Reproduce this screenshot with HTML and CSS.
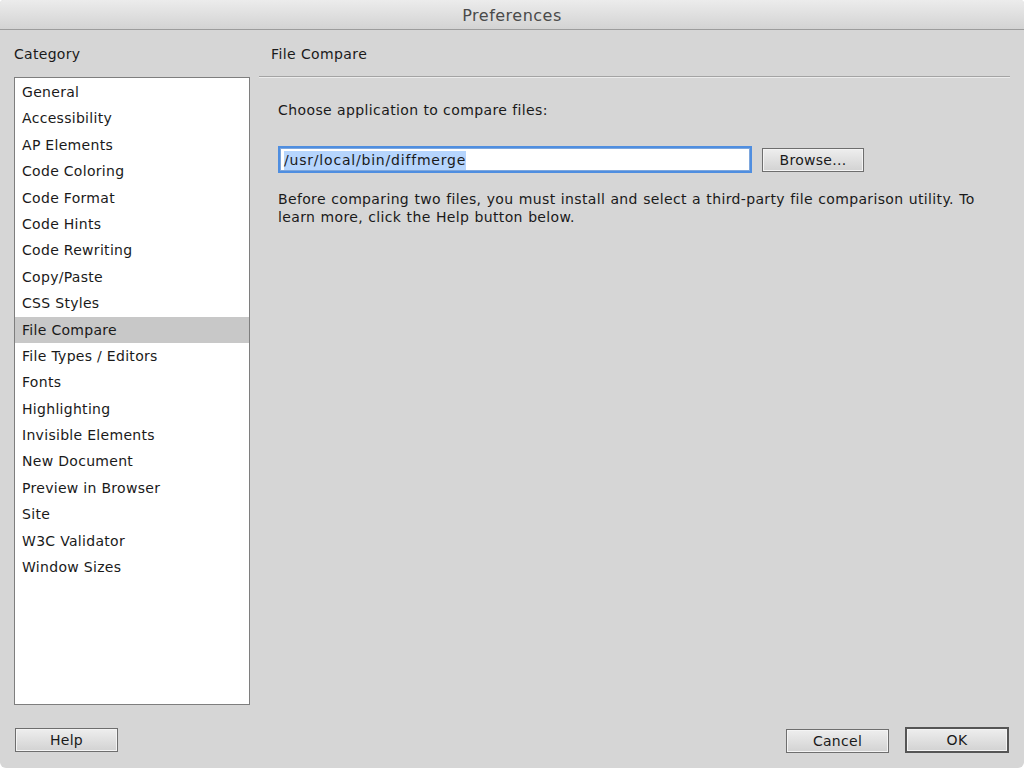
FILE: index.html
```html
<!DOCTYPE html>
<html>
<head>
<meta charset="utf-8">
<link rel="stylesheet" href="styles.css">
</head>
<body>
<div class="window">
  <div class="titlebar">Preferences</div>
  <div class="content">
    <div class="sidebar">
      <div class="label">Category</div>
      <div class="list">
        <div class="item">General</div>
        <div class="item">Accessibility</div>
        <div class="item">AP Elements</div>
        <div class="item">Code Coloring</div>
        <div class="item">Code Format</div>
        <div class="item">Code Hints</div>
        <div class="item">Code Rewriting</div>
        <div class="item">Copy/Paste</div>
        <div class="item">CSS Styles</div>
        <div class="item selected">File Compare</div>
        <div class="item">File Types / Editors</div>
        <div class="item">Fonts</div>
        <div class="item">Highlighting</div>
        <div class="item">Invisible Elements</div>
        <div class="item">New Document</div>
        <div class="item">Preview in Browser</div>
        <div class="item">Site</div>
        <div class="item">W3C Validator</div>
        <div class="item">Window Sizes</div>
      </div>
    </div>
    <div class="panel">
      <div class="panel-title">File Compare</div>
      <div class="panel-body">
        <div class="prompt">Choose application to compare files:</div>
        <div class="row">
          <div class="field"><span class="sel">/usr/local/bin/diffmerge</span></div>
          <div class="btn browse">Browse...</div>
        </div>
        <p class="note">Before comparing two files, you must install and select a third-party file comparison utility. To learn more, click the Help button below.</p>
      </div>
    </div>
  </div>
  <div class="footer">
    <div class="btn help">Help</div>
    <div class="actions">
      <div class="btn cancel">Cancel</div>
      <div class="btn ok">OK</div>
    </div>
  </div>
</div>
</body>
</html>
```
FILE: styles.css
```css
html, body {
  margin: 0;
  padding: 0;
  background: #ffffff;
}
body {
  font-family: "DejaVu Sans", "Liberation Sans", sans-serif;
  font-size: 14px;
  color: #1a1a1a;
}
.window {
  width: 1024px;
  height: 768px;
  background: #d6d6d6;
  border-radius: 4px 4px 6px 6px;
  display: flex;
  flex-direction: column;
  overflow: hidden;
}
.titlebar {
  height: 30px;
  line-height: 31px;
  text-align: center;
  font-size: 16px;
  color: #4a4a4a;
  background: linear-gradient(#ececec, #d3d3d3);
  border-bottom: 1px solid #9c9c9c;
  box-sizing: border-box;
  letter-spacing: 0.5px;
}
.content {
  display: flex;
  flex: 1;
  padding: 0 14px 0 14px;
}
.sidebar {
  width: 236px;
  display: flex;
  flex-direction: column;
}
.label {
  height: 47px;
  line-height: 49px;
  letter-spacing: 0.3px;
}
.list {
  height: 628px;
  box-sizing: border-box;
  background: #ffffff;
  border: 1px solid #7e7e7e;
  padding-top: 1px;
}
.item {
  height: 26.4px;
  line-height: 26px;
  padding-left: 7px;
  letter-spacing: 0.3px;
}
.item.selected {
  background: #c8c8c8;
}
.panel {
  flex: 1;
  margin-left: 9px;
  display: flex;
  flex-direction: column;
}
.panel-title {
  height: 47px;
  line-height: 49px;
  letter-spacing: 0.4px;
  border-bottom: 1px solid #a4a4a4;
  box-shadow: 0 1px 0 #ececec;
  box-sizing: border-box;
  padding-left: 12px;
}
.panel-body {
  padding: 23px 0 0 19px;
}
.prompt {
  letter-spacing: 0.4px;
  line-height: 20px;
}
.row {
  display: flex;
  align-items: center;
  margin-top: 26px;
}
.field {
  width: 474px;
  height: 27px;
  box-sizing: border-box;
  border: 2px solid #4f8ee0;
  box-shadow: inset 0 0 0 1px #7ea7dd;
  background: #ffffff;
  padding: 3px 0 0 4px;
  letter-spacing: 0.8px;
}
.sel {
  background: #b6d5fd;
  line-height: 19px;
  display: inline-block;
}
.btn {
  box-sizing: border-box;
  height: 24px;
  line-height: 22px;
  text-align: center;
  background: linear-gradient(#eeeeee, #d2d2d2);
  border: 1px solid #6e6e6e;
  box-shadow: inset 0 0 0 1px #f4f4f4;
  letter-spacing: 0.3px;
  color: #1a1a1a;
}
.browse {
  width: 102px;
  margin-left: 10px;
}
.note {
  margin: 17px 0 0 0;
  letter-spacing: 0.35px;
  word-spacing: 0.5px;
  line-height: 18px;
  width: 730px;
}
.footer {
  height: 63px;
  display: flex;
  justify-content: space-between;
  align-items: flex-start;
  padding: 23px 15px 0 15px;
  box-sizing: border-box;
}
.help {
  width: 103px;
}
.actions {
  display: flex;
  gap: 16px;
  align-items: center;
}
.cancel {
  width: 103px;
}
.ok {
  width: 104px;
  height: 26px;
  line-height: 22px;
  border: 2px solid #555555;
  margin-top: -1px;
}
```
